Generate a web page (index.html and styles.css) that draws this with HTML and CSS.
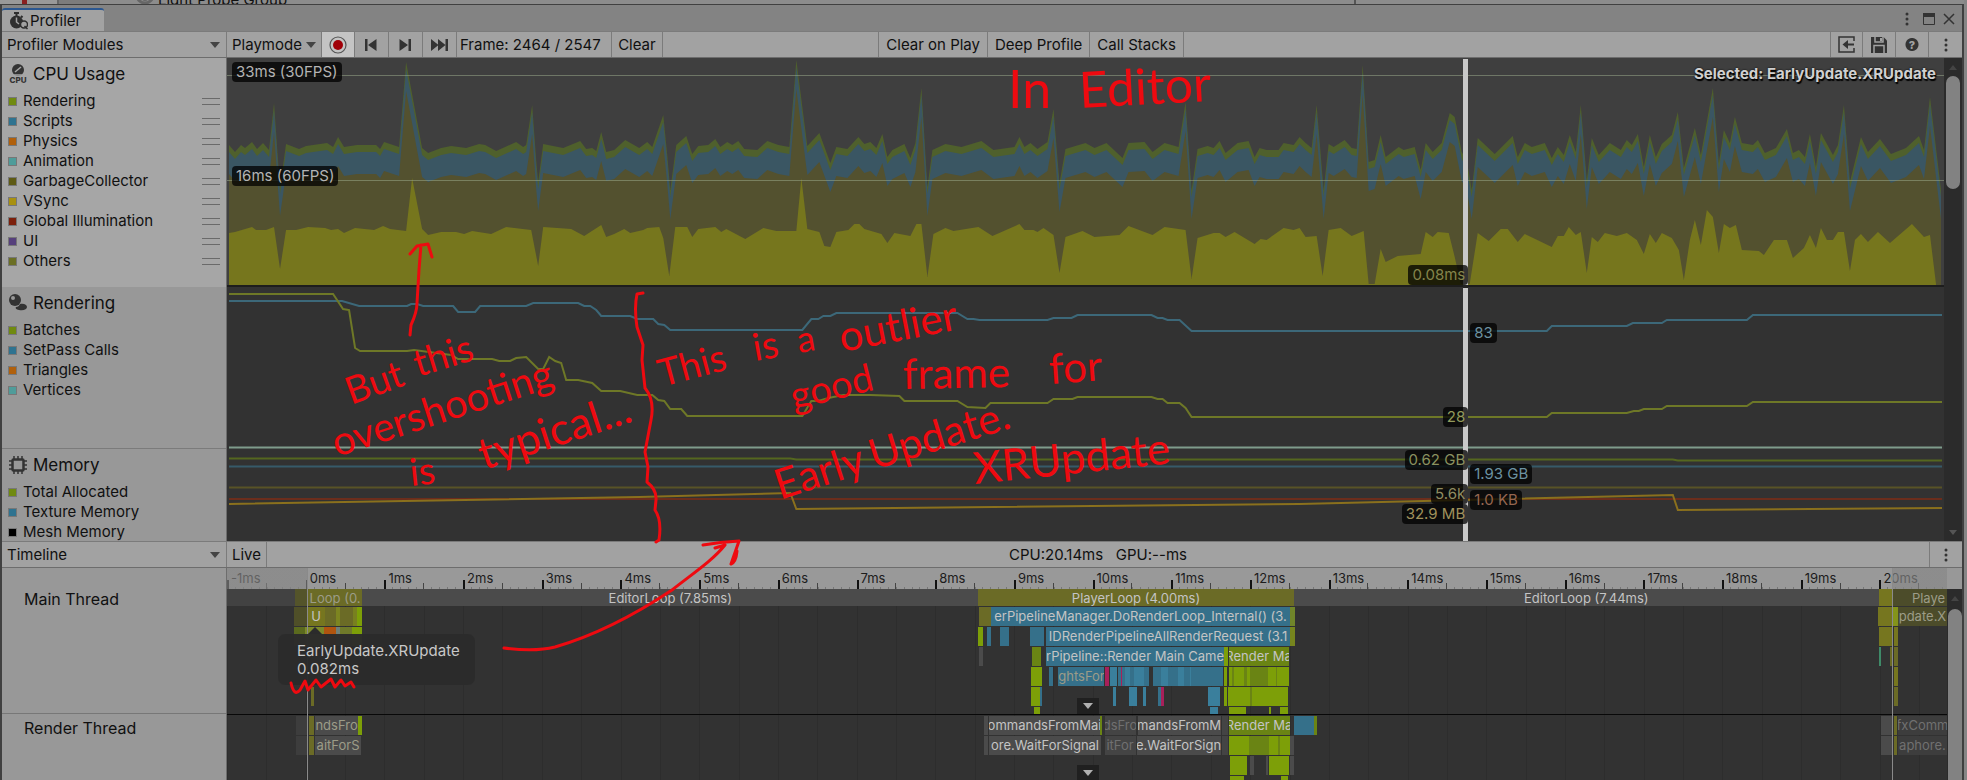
FILE: index.html
```html
<!DOCTYPE html>
<html lang="en">
<head>
<meta charset="utf-8">
<title>Profiler</title>
<link rel="stylesheet" href="styles.css">
</head>
<body>
<div class="behind">
  <span class="behind-left"></span>
  <span class="behind-mid"></span>
  <svg class="behind-icon" viewBox="0 0 18 18"><circle cx="9" cy="9" r="8" fill="none" stroke="#666" stroke-width="3"/><circle cx="9" cy="12" r="3" fill="#666"/></svg>
  <span class="behind-text">Light Probe Group</span>
  <span class="behind-rule"></span>
</div>

<main class="window">
  <header class="tabbar">
    <div class="tab">
      <svg class="icon-tab" viewBox="0 0 19 18"><path d="M5 1h5M7.500 1v3M12 4l1.500 1.500" stroke="#2e2e2e" stroke-width="2"/><circle cx="7.500" cy="10" r="6.500" fill="#2e2e2e"/><path d="M7.500 5.500V10l2.500 2" stroke="#a2a2a2" stroke-width="1.500" fill="none"/><circle cx="15" cy="12.500" r="3.500" fill="#a2a2a2" stroke="#2e2e2e" stroke-width="1.500"/><path d="M15.500 14l3 3" stroke="#2e2e2e" stroke-width="1.500"/></svg>
      <span>Profiler</span>
    </div>
    <div class="window-buttons">
      <button aria-label="Window menu"><svg width="4" height="14" viewBox="0 0 4 14" fill="#333"><circle cx="2" cy="2" r="1.500"/><circle cx="2" cy="7" r="1.500"/><circle cx="2" cy="12" r="1.500"/></svg></button>
      <button aria-label="Maximize"><svg width="12" height="12" viewBox="0 0 12 12"><path d="M.5.500h11v11H.500z" fill="none" stroke="#333"/><path d="M0 0h12v4H0z" fill="#333"/></svg></button>
      <button aria-label="Close"><svg width="12" height="12" viewBox="0 0 12 12"><path d="M1 1l10 10M11 1L1 11" stroke="#333" stroke-width="1.500"/></svg></button>
    </div>
  </header>

  <nav class="toolbar">
    <button class="side-drop">Profiler Modules <i class="caret"></i></button>
    <button class="tool">Playmode <i class="caret"></i></button>
    <button class="tool square record" aria-label="Record"><svg width="18" height="18" viewBox="0 0 18 18"><circle cx="9" cy="9" r="8" fill="none" stroke="#555" stroke-width="1.200"/><circle cx="9" cy="9" r="5" fill="#a00008"/></svg></button>
    <button class="tool step" aria-label="Previous frame"><svg width="12" height="12" viewBox="0 0 12 12" fill="#333"><path d="M0 0h2.500v12H0zM11.500 0v12L3 6z"/></svg></button>
    <button class="tool step" aria-label="Next frame"><svg width="12" height="12" viewBox="0 0 12 12" fill="#333"><path d="M9.500 0H12v12H9.500zM.5 0v12L9 6z"/></svg></button>
    <button class="tool step" aria-label="Last frame"><svg width="17" height="12" viewBox="0 0 17 12" fill="#333"><path d="M14.500 0H17v12h-2.500zM0 0v12l7.500-6zM7 0v12l7.500-6z"/></svg></button>
    <span class="tool frame">Frame: 2464 / 2547</span>
    <button class="tool">Clear</button>
    <span class="gap-small"></span>
    <button class="tool wide first">Clear on Play</button>
    <button class="tool wide">Deep Profile</button>
    <button class="tool wide">Call Stacks</button>
    <span class="gap-large"></span>
    <button class="tool square first" aria-label="Load"><svg width="17" height="17" viewBox="0 0 17 17" fill="none" stroke="#333"><path d="M16 5V1H1v15h15v-4" stroke-width="1.500"/><path d="M16 8.500H7" stroke-width="2"/><path d="M10 4v9L4.500 8.500z" fill="#333" stroke="none"/></svg></button>
    <button class="tool square" aria-label="Save"><svg width="16" height="16" viewBox="0 0 16 16"><path d="M0 0h12.500L16 3.500V16H0z" fill="#333"/><path d="M4 0v5h8V0M3 16V8.500h10V16" fill="none" stroke="#a2a2a2" stroke-width="1.500"/><path d="M9 1h2v3H9z" fill="#a2a2a2"/></svg></button>
    <button class="tool square help" aria-label="Help">?</button>
    <button class="tool square" aria-label="More"><svg width="4" height="14" viewBox="0 0 4 14" fill="#333"><circle cx="2" cy="2" r="1.500"/><circle cx="2" cy="7" r="1.500"/><circle cx="2" cy="12" r="1.500"/></svg></button>
  </nav>

  <section class="modules">
    <aside class="module-list">
      <div class="module cpu">
        <h2><svg width="20" height="20" viewBox="0 0 20 20"><circle cx="10" cy="6" r="6" fill="#333"/><path d="M7 8l6-5" stroke="#a6a6a6" stroke-width="1.500"/><path d="M4 11h12" stroke="#a6a6a6" stroke-width="1.500"/><text class="cpu-tag" x="10" y="19" text-anchor="middle">CPU</text></svg>CPU Usage</h2>
        <ul>
          <li><i class="sw lime"></i>Rendering<b class="grip"></b></li>
          <li><i class="sw blue"></i>Scripts<b class="grip"></b></li>
          <li><i class="sw orange"></i>Physics<b class="grip"></b></li>
          <li><i class="sw teal"></i>Animation<b class="grip"></b></li>
          <li><i class="sw brown"></i>GarbageCollector<b class="grip"></b></li>
          <li><i class="sw gold"></i>VSync<b class="grip"></b></li>
          <li><i class="sw red"></i>Global Illumination<b class="grip"></b></li>
          <li><i class="sw violet"></i>UI<b class="grip"></b></li>
          <li><i class="sw olive"></i>Others<b class="grip"></b></li>
        </ul>
      </div>
      <div class="module rendering">
        <h2><svg width="20" height="20" viewBox="0 0 20 20"><circle cx="7" cy="7" r="6" fill="#333"/><circle cx="5" cy="5" r="2" fill="#989898"/><path d="M12 11c4-1 7 1 7 3s-3 4-8 3c-3-.5-4-2-3-3 2 0 3-1 4-3z" fill="#333"/></svg>Rendering</h2>
        <ul>
          <li><i class="sw lime"></i>Batches</li>
          <li><i class="sw blue"></i>SetPass Calls</li>
          <li><i class="sw orange"></i>Triangles</li>
          <li><i class="sw teal"></i>Vertices</li>
        </ul>
      </div>
      <div class="module memory">
        <h2><svg width="20" height="20" viewBox="0 0 20 20"><path d="M6 1v18M10 1v18M14 1v18M1 6h18M1 10h18M1 14h18" stroke="#333" stroke-width="1.500"/><rect x="4.500" y="4.500" width="11" height="11" rx="1" fill="#989898" stroke="#333" stroke-width="2.500"/></svg>Memory</h2>
        <ul>
          <li><i class="sw lime"></i>Total Allocated</li>
          <li><i class="sw blue"></i>Texture Memory</li>
          <li><i class="sw black"></i>Mesh Memory</li>
        </ul>
      </div>
    </aside>

    <div class="charts">
      <svg class="plot" viewBox="228 58 1716 482" preserveAspectRatio="none">
        <defs>
          <path id="total" d="M230 145L236 152 242 145 246 148 253 142 258 149 264 143 270 150 275 103 279 160 281 187 287 144 300 149 307 146 328 143 334 147 339 137 345 147 358 145 377 145 381 149 385 142 400 147 407 62 423 148 429 153 442 148 452 146 467 148 480 144 486 145 497 151 517 142 524 147 527 145 533 105 537 160 539 182 544 144 564 148 581 141 587 149 593 148 597 151 602 132 607 152 615 150 626 140 640 148 648 142 653 147 664 115 668 155 671 190 677 145 687 136 693 154 699 146 709 145 716 139 721 147 728 142 733 145 739 141 745 149 758 150 768 141 779 145 790 147 797 60 808 146 820 133 831 163 837 147 848 149 859 137 865 144 871 142 877 148 883 134 888 157 893 150 905 144 911 158 916 143 922 88 928 187 933 150 946 144 962 147 982 141 994 150 1015 147 1020 137 1025 147 1031 143 1038 149 1048 142 1054 109 1060 183 1066 149 1086 143 1095 148 1107 143 1123 158 1129 143 1145 142 1153 152 1165 143 1179 147 1186 102 1192 190 1198 149 1208 146 1214 148 1220 141 1226 153 1238 143 1249 141 1255 157 1260 148 1267 150 1279 150 1284 143 1294 145 1300 137 1306 143 1312 148 1317 105 1324 190 1329 144 1334 147 1345 140 1352 148 1357 149 1363 65 1369 162 1375 160 1381 135 1386 157 1399 147 1404 150 1415 147 1421 170 1426 143 1433 152 1442 143 1450 113 1455 117 1462 152 1467 160 1472 190 1478 138 1495 154 1513 136 1518 157 1525 143 1532 147 1545 143 1552 158 1558 147 1564 155 1570 135 1576 152 1581 105 1587 180 1592 138 1599 155 1610 143 1621 150 1627 140 1632 145 1638 134 1644 167 1650 135 1656 157 1662 144 1672 135 1678 112 1684 168 1695 128 1701 155 1713 88 1719 163 1724 130 1730 143 1735 117 1742 143 1753 145 1758 140 1765 153 1776 148 1787 129 1793 153 1799 150 1805 157 1810 134 1816 167 1821 133 1833 155 1838 145 1844 105 1850 182 1861 137 1868 152 1880 139 1891 154 1906 148 1919 136 1924 150 1930 97 1941 190V286H230z"/>
        </defs>
        <rect x="228" y="58" width="1716" height="228" fill="#3f3f3f"/>
        <use href="#total" fill="#4f602c"/>
        <use href="#total" y="7" fill="#3a5663"/>
        <use href="#total" y="29" fill="#53512f"/>
        <path fill="#76761d" d="M230 233L236 232 253 227 257 230 267 230 275 227 281 269 287 230 297 230 309 227 326 228 332 230 339 229 345 233 356 228 375 230 384 226 391 229 407 231 413 178 423 229 429 235 442 232 457 232 465 234 473 231 492 234 507 227 532 230 539 266 544 227 572 229 585 236 602 225 607 237 615 234 625 229 631 233 644 230 648 228 660 227 664 238 670 276 676 227 688 227 693 237 699 229 716 227 722 232 727 229 746 239 764 228 777 231 797 231 802 178 808 229 820 232 825 246 831 247 837 232 849 230 855 224 860 224 865 229 882 234 888 243 895 233 911 236 917 224 922 224 928 277 934 234 946 228 954 231 979 227 993 236 1020 224 1025 230 1034 230 1038 232 1044 228 1054 235 1060 273 1066 237 1083 231 1095 237 1120 235 1129 226 1153 235 1165 227 1186 230 1192 279 1198 238 1214 233 1220 233 1226 237 1235 232 1255 244 1261 239 1267 240 1284 228 1294 230 1300 228 1306 237 1317 236 1323 276 1329 230 1341 228 1352 236 1364 231 1369 284 1375 284 1381 249 1386 262 1398 256 1421 254 1426 232 1433 237 1438 232 1449 233 1455 257 1461 284 1470 284 1478 233 1489 241 1501 229 1508 229 1518 242 1525 234 1552 247 1558 236 1564 236 1569 227 1576 235 1581 232 1587 273 1592 237 1598 242 1605 233 1617 236 1627 233 1637 240 1644 254 1650 234 1656 243 1662 233 1672 238 1679 250 1684 280 1690 240 1695 220 1701 245 1707 210 1713 217 1719 253 1724 224 1730 228 1736 225 1742 250 1759 251 1764 255 1774 240 1787 240 1793 258 1804 248 1810 235 1816 248 1821 228 1827 240 1833 240 1838 232 1844 232 1850 271 1855 240 1861 234 1868 242 1878 232 1890 243 1912 224 1924 237 1930 235 1936 284V286H230z"/>
        <path d="M228 75.500H1944M228 180.500H1944" stroke="#a0b090" stroke-opacity=".5"/>
        <rect x="228" y="285" width="1716" height="255" fill="#323232"/>
        <rect x="228" y="285" width="1716" height="2" fill="#1d1d1d"/>
        <g class="series">
          <path stroke="#3c6879" d="M230 301H343L360 306H408L412 304H418L424 306H454L459 312H476L481 306H527L534 303H579L585 306H591L597 310 602 316H631L638 319H654L659 324 665 325 671 330H803L812 319H819L824 316H831L837 313H958L968 319H974L980 320H1048L1054 318H1072L1078 315H1152L1158 318H1163L1168 320H1180L1192 331H1547L1552 326H1627L1633 323H1662L1667 320H1747L1753 315H1942"/>
          <path stroke="#6e7827" d="M230 294H334L344 309 350 310 356 348 361 351H408L415 350 452 355 459 359H493L500 361H511L517 358 527 357 539 369H544L550 357 556 361 562 363 567 380H579L593 383 602 391H621L638 395H653L659 400 665 401 671 409H682L688 416H803L812 401H819L829 398 844 395H871L900 396 905 401H958L968 407 986 408 991 403H1048L1054 399H1073L1078 397H1152L1158 399H1163L1168 403H1180L1186 408 1192 417H1547L1552 413H1627L1634 411H1639L1644 409H1662L1667 406H1747L1753 402H1942"/>
          <path stroke="#7f9c8c" d="M230 447.500H1942"/>
          <path stroke="#55671f" d="M230 458.500H791L797 459.500H1673L1678 460.500H1942"/>
          <path stroke="#365a69" d="M230 466.500H1942"/>
          <path stroke="#585326" d="M230 487.500H1942"/>
          <path stroke="#6b2d1c" d="M230 499H1942"/>
          <path stroke="#8a701d" d="M230 504L640 497 791 493 797 509 1300 504 1673 495 1678 510 1942 508"/>
        </g>
      </svg>
      <span class="badge fps30">33ms (30FPS)</span>
      <span class="badge fps60">16ms (60FPS)</span>
      <span class="selected">Selected: EarlyUpdate.XRUpdate</span>
      <div class="cursor">
        <span class="badge before v-ms">0.08ms</span>
        <span class="badge after v-setpass">83</span>
        <span class="badge before v-batches">28</span>
        <span class="badge before v-total">0.62 GB</span>
        <span class="badge after v-texture">1.93 GB</span>
        <span class="badge before v-count">5.6k</span>
        <span class="badge after v-gc">1.0 KB</span>
        <span class="badge before v-mesh">32.9 MB</span>
      </div>
    </div>
    <div class="scroll"><i class="up"></i><div class="thumb"></div><i class="down"></i></div>
  </section>

  <nav class="toolbar">
    <button class="side-drop">Timeline <i class="caret"></i></button>
    <button class="tool">Live</button>
    <span class="stats">CPU:20.14ms &nbsp; GPU:--ms</span>
    <button class="tool square first" aria-label="Timeline menu"><svg width="4" height="14" viewBox="0 0 4 14" fill="#333"><circle cx="2" cy="2" r="1.500"/><circle cx="2" cy="7" r="1.500"/><circle cx="2" cy="12" r="1.500"/></svg></button>
  </nav>

  <section class="timeline">
    <aside class="threads">
      <div class="thread main-thread">Main Thread</div>
      <div class="thread render-thread">Render Thread</div>
    </aside>
    <div class="lanes">
      <div class="ruler" id="ruler"></div>
      <div class="tracks" id="tracks">
        <div class="divider"></div>
        <button class="expand main-expand" aria-label="Expand main thread"><i class="caret"></i></button>
        <button class="expand render-expand" aria-label="Expand render thread"><i class="caret"></i></button>
        <div class="tooltip">EarlyUpdate.XRUpdate<br>0.082ms</div>
      </div>
      <div class="outside start"></div>
      <div class="outside end"></div>
    </div>
    <div class="scroll timeline-scroll"><i class="up"></i><div class="thumb"></div></div>
  </section>
</main>

<svg class="ink">
  <g class="ink-text">
    <text font-size="52" transform="translate(1008 108)">In</text>
    <text font-size="50" transform="translate(1080 108) rotate(-3)">Editor</text>
    <text font-size="38" transform="translate(351 405) rotate(-20)">But</text>
    <text font-size="38" transform="translate(418 377) rotate(-17)">this</text>
    <text font-size="40" transform="translate(337 457) rotate(-18)">overshooting</text>
    <text font-size="38" transform="translate(411 486) rotate(-6)">is</text>
    <text font-size="44" transform="translate(484 470) rotate(-18)">typical...</text>
    <text font-size="38" transform="translate(662 387) rotate(-15)">This</text>
    <text font-size="38" transform="translate(755 361) rotate(-10)">is</text>
    <text font-size="36" transform="translate(799 353) rotate(-10)">a</text>
    <text font-size="42" transform="translate(842 352) rotate(-11)">outlier</text>
    <text font-size="38" transform="translate(794 410) rotate(-14)">good</text>
    <text font-size="42" transform="translate(903 389) rotate(-1)">frame</text>
    <text font-size="42" transform="translate(1050 384) rotate(-4)">for</text>
    <text font-size="42" transform="translate(780 500) rotate(-18)">Early</text>
    <text font-size="42" transform="translate(874 470) rotate(-17)">Update.</text>
    <text font-size="44" transform="translate(975 484) rotate(-6)">XRUpdate</text>
  </g>
  <path d="M410 335L411 325Q417 312 417 303L419 270 421 245M410 254L417 246 428 244 432 257"/>
  <path d="M643 293L637 294Q634 308 637 327L643 345 642 360 645 388Q655 400 651 420L645 452 648 467 647 482Q657 490 656 500L655 510Q662 520 659 540L656 542"/>
  <path d="M504 648Q535 652 555 647C600 634 645 608 672 590C695 572 713 560 725 545L715 548M703 545Q720 542 739 541L731 564Q736 562 737 551"/>
  <path d="M291 683Q294 697 300 690L305 681 308 690 316 680 321 687 331 679 335 687 341 680 345 686 351 682 354 687"/>
</svg>
<script src="script.js"></script>
</body>
</html>
```
FILE: styles.css
```css
* { box-sizing: border-box; }

body {
  margin: 0;
  height: 100vh;
  overflow: hidden;
  position: relative;
  display: flex;
  flex-direction: column;
  padding-right: 3px;
  background: #868686;
  color: #101010;
  font: 15px/20px Inter, "Liberation Sans", sans-serif;
}

button {
  margin: 0;
  padding: 0;
  border: 0;
  background: none;
  color: inherit;
  font: inherit;
}

ul { margin: 0; padding: 0; list-style: none; }

/* sliver of the window underneath */
.behind {
  flex: 0 0 4px;
  display: flex;
  align-items: flex-end;
  overflow: hidden;
  background: #8c8c8c;
}
.behind-left { width: 57px; height: 4px; background: linear-gradient(90deg, #999 22px, #8a2020 22px, #8a2020 27px, #999 27px); }
.behind-mid { width: 43px; height: 4px; background: #7c7c7c; border-left: 2px solid #666; margin-right: 36px; }
.behind-icon { width: 18px; height: 18px; flex: none; }
.behind-text { margin: 0 0 -6px 4px; flex: 1; }
.behind-rule { width: 610px; height: 4px; border-left: 2px solid #555; }

.window {
  flex: 1;
  min-height: 0;
  display: flex;
  flex-direction: column;
  border: 1px solid #404040;
  border-width: 1px 2px 0;
  background: #989898;
}

.tabbar {
  flex: 0 0 26px;
  display: flex;
  justify-content: space-between;
  background: #838383;
  padding-top: 3px;
}
.tab {
  width: 102px;
  display: flex;
  align-items: center;
  gap: 2px;
  padding-left: 7px;
  border-top: 2px solid #2b5790;
  border-radius: 3px 3px 0 0;
  background: #a2a2a2;
}
.icon-tab { width: 19px; height: 18px; }
.window-buttons { display: flex; align-items: center; gap: 14px; padding: 0 7px 2px 0; }
.window-buttons button { display: flex; }
.window-buttons button:last-child { margin-left: -6px; }

.toolbar {
  flex: 0 0 27px;
  display: flex;
  border-top: 1px solid #7b7b7b;
  border-bottom: 1px solid #6d6d6d;
  background: #a2a2a2;
}
.side-drop {
  width: 225px;
  display: flex;
  align-items: center;
  justify-content: space-between;
  padding: 0 6px 0 5px;
  border-right: 1px solid #7b7b7b;
}
.caret {
  border: 5px solid transparent;
  border-top: 6px solid #444;
  border-bottom: 0;
}
.tool {
  display: flex;
  align-items: center;
  justify-content: center;
  gap: 4px;
  padding: 0 5px;
  border-right: 1px solid #7b7b7b;
  white-space: nowrap;
}
.tool.wide { padding: 0 7px; }
.tool.first { border-left: 1px solid #7b7b7b; }
.tool.square { width: 33px; padding: 0; }
.tool.step { width: 34px; padding: 0; }
.tool.square:last-child { border-right: 0; }
.tool.frame { width: 155px; justify-content: flex-start; padding: 0 3px; }
.frame + .tool { width: 51px; }
.record { background: #c4c4c4; }
.gap-small { flex: 1; }
.gap-large { flex: 3; }
.help {
  background: radial-gradient(circle, #333 6px, transparent 7px);
  color: #a2a2a2;
  font-size: 11px;
  font-weight: 800;
}
.stats { flex: 1; text-align: center; line-height: 25px; }

/* modules and charts */
.modules { flex: 0 0 483px; display: flex; min-height: 0; overflow: hidden; }
.module-list { width: 225px; border-right: 1px solid #6d6d6d; overflow: hidden; }
.module { padding: 5px 6px 0; border-bottom: 1px solid #7b7b7b; }
.module.cpu { height: 229px; background: #a6a6a6; border-bottom: 0; }
.module.rendering { height: 162px; }
.module.memory { height: 130px; }
.module h2 {
  display: flex;
  align-items: center;
  gap: 5px;
  height: 22px;
  margin: 0 0 6px;
  font-size: 17px;
  font-weight: 400;
}
.cpu-tag { font-size: 8px; font-weight: 800; fill: #333; }
.module li { display: flex; align-items: center; height: 20px; }
.sw { width: 9px; height: 9px; margin-right: 6px; outline: 1px solid #777; outline-offset: -1px; }
.lime { background: #708a10; }
.blue { background: #2f7390; }
.orange { background: #b0600c; }
.teal { background: #4f9c9a; }
.brown { background: #5e5a14; }
.gold { background: #a89010; }
.red { background: #7c200c; }
.violet { background: #56407c; }
.olive { background: #6b6f24; }
.black { background: #000; }
.grip { margin-left: auto; width: 18px; height: 7px; border: solid #6a6a6a; border-width: 1px 0; }

.charts { flex: 1; position: relative; background: #323232; overflow: hidden; }
.plot { display: block; width: 100%; height: 482px; }
.series { fill: none; }
.series path { stroke-width: 2; vector-effect: non-scaling-stroke; }

.badge {
  position: absolute;
  padding: 0 4px;
  border-radius: 4px;
  background: rgba(0, 0, 0, .75);
  color: #b4b4b4;
  line-height: 20px;
  white-space: nowrap;
}
.fps30 { left: 5px; top: 4px; }
.fps60 { left: 5px; top: 108px; }
.selected {
  position: absolute;
  top: 6px;
  right: 8px;
  color: #d0d0d0;
  font-weight: 700;
  text-shadow: 1px 2px 1px #000, 0 0 2px #000;
}
.cursor {
  position: absolute;
  left: 72%;
  top: 1px;
  bottom: 0;
  width: 5px;
  background: linear-gradient(#c9c9c9 226px, #222 226px, #222 229px, #c9c9c9 229px);
}
.before { right: 0; padding-right: 3px; }
.after { left: 7px; }
.v-ms { top: 206px; color: #85854c; }
.v-setpass { top: 264px; color: #6d93a2; }
.v-batches { top: 348px; color: #939a5c; }
.v-total { top: 391px; color: #8a9160; }
.v-texture { top: 405px; color: #6d93a2; }
.v-count { top: 425px; color: #8f8b60; }
.v-gc { top: 431px; color: #956650; }
.v-mesh { top: 445px; color: #a0925c; }

.scroll {
  flex: 0 0 18px;
  display: flex;
  flex-direction: column;
  align-items: center;
  padding: 7px 0 6px;
  background: #2b2b2b;
}
.scroll .thumb { width: 14px; height: 113px; margin-top: 6px; border-radius: 7px; background: #828282; }
.up { border: 4px solid transparent; border-top: 0; border-bottom: 5px solid #444; }
.down { margin-top: auto; border: 4px solid transparent; border-bottom: 0; border-top: 5px solid #555; }

/* timeline */
.timeline { flex: 1; display: flex; min-height: 0; overflow: hidden; }
.threads { width: 225px; border-right: 1px solid #6d6d6d; font-size: 16px; }
.thread { padding: 21px 0 0 22px; }
.main-thread { height: 146px; border-bottom: 1px solid #777; }
.render-thread { padding-top: 4px; }
.lanes { flex: 1; display: flex; flex-direction: column; position: relative; overflow: hidden; background: #323232; }
.ruler { flex: 0 0 21px; display: flex; overflow: hidden; background: #999; }
.tick {
  flex: 0 0 4.575%;
  padding-left: 4px;
  color: #1c1c1c;
  font-size: 13px;
  line-height: 21px;
  background:
    linear-gradient(#111, #111) 0 100% / 2px 9px no-repeat,
    linear-gradient(#444, #444) 50% 100% / 1px 6px no-repeat,
    repeating-linear-gradient(90deg, #777 0 1px, transparent 1px 10%) 0 100% / 100% 2px no-repeat;
}
.tracks {
  flex: 1;
  position: relative;
  background: repeating-linear-gradient(90deg, #2d2d2d 0 1px, transparent 1px 2.288%);
}
.bar {
  position: absolute;
  display: flex;
  justify-content: center;
  overflow: hidden;
  color: #c4c4c4;
  font-size: 13px;
  line-height: 19px;
  white-space: nowrap;
}
.bar.dim { color: #9c9c88; }
.bar.faint { color: #707070; }
.divider { position: absolute; left: 0; right: 0; top: 125px; height: 1px; background: #080808; }
.outside {
  position: absolute;
  top: 0;
  bottom: 0;
  background: linear-gradient(rgba(134, 134, 134, .65) 21px, transparent 21px);
}
.outside.start { left: 0; width: 4.7%; border-right: 1px solid #8a8a8a; }
.outside.end { left: 96.8%; right: 0; border-left: 1px solid #8a8a8a; }
.expand {
  position: absolute;
  left: 49.4%;
  width: 22px;
  height: 16px;
  display: flex;
  align-items: center;
  justify-content: center;
  background: #202020;
}
.expand .caret { border-top-color: #b0b0b0; }
.main-expand { top: 109px; }
.render-expand { top: 176px; }
.tooltip {
  position: absolute;
  z-index: 2;
  left: 2.97%;
  top: 45px;
  padding: 8px 15px 7px 19px;
  border-radius: 7px;
  background: rgba(43, 43, 43, .97);
  color: #c8c8c8;
  line-height: 18px;
}
.tooltip::before {
  content: "";
  position: absolute;
  left: 30px;
  top: -7px;
  border: 7px solid transparent;
  border-top: 0;
  border-bottom-color: #2b2b2b;
}
.timeline-scroll { flex-basis: 15px; margin-top: 21px; padding: 7px 0 0; }
.timeline-scroll .thumb { flex: 1; margin-top: 8px; border-radius: 7px 7px 0 0; }

/* pen notes over the whole window */
.ink {
  position: absolute;
  z-index: 5;
  left: 0;
  top: 0;
  width: 100%;
  height: 100%;
  pointer-events: none;
  fill: none;
  stroke: #ee0a10;
  stroke-width: 3;
  stroke-linecap: round;
  stroke-linejoin: round;
}
.ink-text { fill: #ee0a10; stroke: none; font-family: Lato, cursive; }
```
FILE: script.js
```
const SPAN = 1719;
const OLIVE = '#6b6b26', YELLOW = '#76761f', BLUE = '#35708a', LIGHTBLUE = '#3a7f9c';
const LIME = '#7d9f08', MOSS = '#6a8414', GREY = '#4b4b4b', DARK = '#3d3d3d', PINK = '#a8205a';

const mainRow = n => (n === 0 ? 0 : 18 + (n - 1) * 20);
const renderRow = n => 127 + n * 20;

// [start, end, color, label, tone]
const main = [
  [[0, 68, '#424242'], [68, 81, '#54542a'], [81, 135, OLIVE, 'Loop (0.', 'dim'],
   [135, 751, GREY, 'EditorLoop (7.85ms)'], [751, 1066, OLIVE, 'PlayerLoop (4.00ms)'],
   [1066, 1651, GREY, 'EditorLoop (7.44ms)'], [1651, 1665, YELLOW], [1665, 1719, '#4c4c2a'], [1682, 1719, '#4c4c2a', 'Playe', 'dim']],
  [[67, 80, '#4f4f28'], [80, 98, YELLOW, 'U'], [98, 109, OLIVE], [109, 113, '#7d8520'], [113, 126, OLIVE],
   [126, 130, '#78801f'], [130, 135, LIME],
   [752, 764, OLIVE], [764, 1062, BLUE, 'erPipelineManager.DoRenderLoop_Internal() (3.'], [1062, 1067, '#70852a'],
   [1650, 1665, YELLOW], [1665, 1670, '#84941a'], [1670, 1719, '#4c4c2a', 'pdate.X', 'dim']],
  [[67, 78, '#5b6a1e'], [78, 97, '#7d8a2a'], [97, 109, '#b0540f'], [109, 113, '#6f8078'], [113, 125, '#6f7a2a'], [125, 135, LIME],
   [751, 756, LIME], [760, 764, BLUE], [773, 782, BLUE], [803, 817, BLUE],
   [819, 1062, BLUE, 'IDRenderPipelineAllRenderRequest (3.1'], [1062, 1067, '#76851e'],
   [1651, 1665, YELLOW], [1666, 1670, '#76761f']],
  [[752, 756, GREY], [805, 814, MOSS], [819, 996, BLUE, 'rPipeline::Render Main Came'], [996, 1000, LIME],
   [1001, 1061, MOSS, 'Render Ma', 'soft'], [1651, 1653, '#3f8a68'], [1662, 1665, OLIVE], [1666, 1670, OLIVE]],
  [[804, 815, LIME], [822, 826, BLUE], [831, 877, BLUE, 'ghtsFor', 'dim'], [877, 881, PINK], [882, 889, LIGHTBLUE],
   [890, 921, BLUE], [893, 894, PINK], [897, 902, LIGHTBLUE], [906, 916, LIGHTBLUE], [925, 995, BLUE], [933, 940, LIGHTBLUE],
   [950, 956, LIGHTBLUE], [962, 963, LIGHTBLUE], [996, 999, LIME], [1001, 1061, LIME], [1004, 1006, MOSS], [1016, 1019, MOSS], [1022, 1040, MOSS], [1048, 1049, MOSS], [1666, 1670, YELLOW]],
  [[84, 87, OLIVE], [804, 813, LIME], [813, 815, BLUE], [885, 888, LIGHTBLUE], [901, 909, LIGHTBLUE], [915, 918, LIGHTBLUE], [930, 933, BLUE],
   [933, 936, PINK], [980, 992, LIGHTBLUE], [996, 999, LIME], [1000, 1060, LIME], [1022, 1024, MOSS], [1666, 1670, OLIVE]],
  [[807, 813, LIME], [982, 990, LIGHTBLUE], [1001, 1018, LIME], [1041, 1043, LIME], [1052, 1060, LIME]]
];

const render = [
  [[69, 81, DARK], [82, 87, OLIVE], [88, 131, GREY, 'ndsFro', 'dim'], [131, 135, LIME],
   [757, 761, GREY], [762, 872, GREY, 'ommandsFromMai'], [872, 874, MOSS], [877, 908, '#444', 'dsFro', 'faint'],
   [910, 993, GREY, 'mandsFromM'], [994, 1000, '#444'], [1001, 1062, MOSS, 'Render Ma', 'soft'], [1066, 1086, BLUE], [1086, 1089, MOSS],
   [1653, 1665, GREY], [1666, 1669, OLIVE], [1670, 1719, DARK, 'fxComm', 'faint']],
  [[69, 81, DARK], [82, 87, OLIVE], [88, 134, GREY, 'aitForS', 'dim'],
   [757, 761, GREY], [762, 873, GREY, 'ore.WaitForSignal'], [877, 908, '#444', 'itFor', 'faint'], [909, 993, GREY, 'e.WaitForSign'],
   [994, 1000, '#444'], [1001, 1062, LIME], [1021, 1041, MOSS], [1050, 1052, MOSS], [1062, 1066, GREY],
   [1653, 1665, GREY], [1666, 1669, OLIVE], [1670, 1719, DARK, 'aphore.', 'faint']],
  [[1002, 1019, LIME], [1022, 1026, GREY], [1038, 1040, GREY], [1041, 1061, LIME], [1062, 1066, GREY]],
  [[1002, 1016, LIME], [1053, 1060, LIME]]
];

const tracks = document.getElementById('tracks');
const divider = tracks.querySelector('.divider');

function draw(rows, top, height) {
  rows.forEach((row, n) => row.forEach(([start, end, color, label, tone]) => {
    const bar = document.createElement('div');
    bar.className = 'bar' + (tone ? ' ' + tone : '');
    bar.style.left = (start / SPAN * 100) + '%';
    bar.style.width = ((end - start) / SPAN * 100) + '%';
    bar.style.top = top(n) + 'px';
    bar.style.height = height(n) + 'px';
    bar.style.background = color;
    if (label) bar.textContent = label;
    tracks.insertBefore(bar, divider);
  }));
}

draw(main, mainRow, n => (n === 0 ? 17 : n === 6 ? 7 : 19));
draw(render, renderRow, () => 19);

const ruler = document.getElementById('ruler');
for (let ms = -1; ms <= 20; ms++) {
  const tick = document.createElement('div');
  tick.className = 'tick';
  tick.textContent = ms + 'ms';
  ruler.append(tick);
}
```
